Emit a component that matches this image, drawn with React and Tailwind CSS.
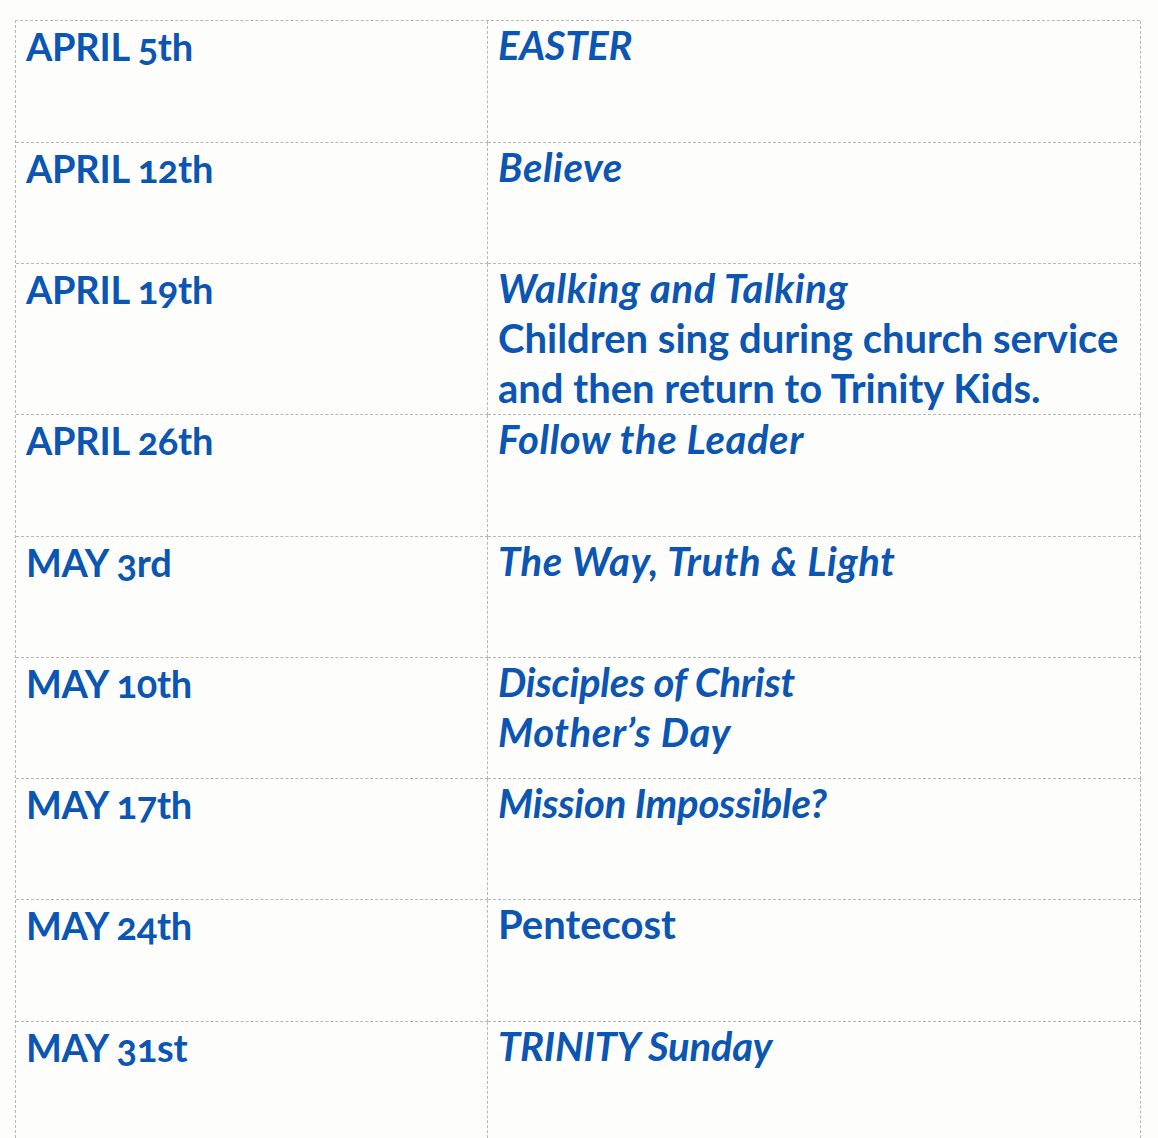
import React from 'react';

const rows = [
  { date: 'APRIL 5th', h: 'h-[122px]', lines: [{ text: 'EASTER', italic: true, plain: true }] },
  { date: 'APRIL 12th', h: 'h-[121px]', lines: [{ text: 'Believe', italic: true }] },
  {
    date: 'APRIL 19th',
    h: 'h-[151px]',
    lines: [
      { text: 'Walking and Talking', italic: true },
      { text: 'Children sing during church service', italic: false },
      { text: 'and then return to Trinity Kids.', italic: false },
    ],
  },
  { date: 'APRIL 26th', h: 'h-[122px]', lines: [{ text: 'Follow the Leader', italic: true }] },
  { date: 'MAY 3rd', h: 'h-[121px]', lines: [{ text: 'The Way, Truth & Light', italic: true }] },
  {
    date: 'MAY 10th',
    h: 'h-[121px]',
    lines: [
      { text: 'Disciples of Christ', italic: true, plain: true },
      { text: 'Mother\u2019s Day', italic: true },
    ],
  },
  { date: 'MAY 17th', h: 'h-[121px]', lines: [{ text: 'Mission Impossible?', italic: true, plain: true }] },
  { date: 'MAY 24th', h: 'h-[122px]', lines: [{ text: 'Pentecost', italic: false }] },
  { date: 'MAY 31st', h: 'h-[121px]', lines: [{ text: 'TRINITY Sunday', italic: true, plain: true }] },
];

export default function App() {
  return (
    <div className="h-[1138px] w-full overflow-hidden bg-[#fdfdfc] pt-[20px] pl-[15px] font-['Lato','Liberation_Sans',sans-serif] font-bold text-[#0b55b3] [font-feature-settings:'onum']">
      <div className="grid w-[1125px] grid-cols-[472px_653px] border-t border-l border-dashed border-[#b8b8b8]">
        {rows.map((row) => (
          <React.Fragment key={row.date}>
            <div className={`${row.h} border-r border-b border-dashed border-[#b8b8b8] pl-[10px] text-[38px] leading-[51px] tracking-[-0.3px]`}>
              {row.date}
            </div>
            <div className={`${row.h} border-r border-b border-dashed border-[#b8b8b8] pl-[10px] text-[40px] leading-[51px] whitespace-nowrap`}>
              {row.lines.map((l) => (
                <div
                  key={l.text}
                  className={`-mt-px ${l.italic ? 'italic' : ''} ${l.italic && !l.plain ? 'tracking-[0.6px]' : ''} ${l.italic && l.plain ? 'tracking-[-0.2px]' : ''}`}
                >
                  {l.text}
                </div>
              ))}
            </div>
          </React.Fragment>
        ))}
      </div>
    </div>
  );
}
